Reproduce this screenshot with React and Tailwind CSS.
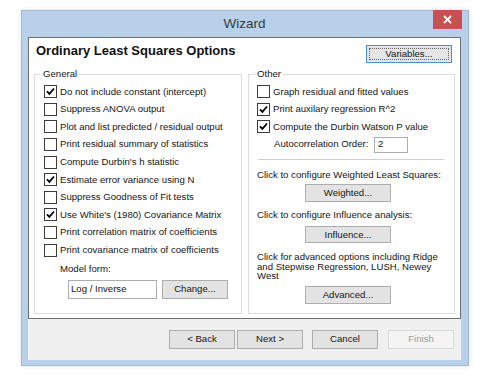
import React from "react";

const Check = ({ checked }) => (
  <span className="w-[13px] h-[13px] border border-[#3c3c3c] bg-white flex items-center justify-center shrink-0">
    {checked && (
      <svg width="9" height="9" viewBox="0 0 9 9">
        <path d="M1 4.3 L3.4 6.8 L8 1.5" fill="none" stroke="#000" strokeWidth="1.8" />
      </svg>
    )}
  </span>
);

const Row = ({ checked, label }) => (
  <div className="h-[17.6px] flex items-center gap-[3px] whitespace-nowrap">
    <Check checked={checked} />
    <span>{label}</span>
  </div>
);

const Btn = ({ children, className, disabled }) => (
  <div
    className={
      (disabled
        ? "bg-[#f4f4f4] border-[#d9d9d9] text-[#a0a0a0] "
        : "bg-[#e3e3e3] border-[#adadad] ") +
      "flex items-center justify-center border " +
      className
    }
  >
    {children}
  </div>
);

export default function App() {
  return (
    <div className="w-[500px] h-[375px] bg-white font-['Liberation_Sans',Arial,sans-serif] text-[9.6px] text-[#151515] pt-[10px] pl-[21px]">
      <div className="w-[448px] h-[356px] bg-[#b8d0e9] border border-[#a3bcd6] flex flex-col pl-[6px] pr-[7px] pb-[5px] shadow-[0_0_5px_rgba(0,0,0,0.12)]">
        <div className="h-[26px] shrink-0 relative flex items-center justify-center">
          <span className="text-[13.5px] text-[#3a3a3a] mt-[1px]">Wizard</span>
          <div className="absolute -right-[1px] -top-[1px] w-[29px] h-[19px] bg-[#c75050] flex items-center justify-center">
            <svg width="9" height="9" viewBox="0 0 9 9">
              <path d="M1 1 L8 8 M8 1 L1 8" stroke="#fff" strokeWidth="1.8" />
            </svg>
          </div>
        </div>
        <div className="flex-1 bg-[#f0f0f0] flex flex-col">
          <div className="h-[282px] shrink-0 bg-white border border-[#6f6f6f] flex flex-col">
            <div className="h-[36px] shrink-0 flex justify-between items-start pl-[7px] pr-[8px]">
              <span className="mt-[5px] text-[13px] font-bold leading-[15px] text-[#111]">
                Ordinary Least Squares Options
              </span>
              <div className="mt-[7px] w-[86px] h-[18px] relative bg-[#e5e5e5] border border-[#4d90d0] flex items-center justify-center">
                <div className="absolute inset-[2px] border border-dotted border-[#666]"></div>
                <span>Variables...</span>
              </div>
            </div>
            <div className="flex pl-[5px] gap-[6px] h-[240px]">
              <div className="w-[208px] h-full border border-[#dcdcdc] relative pl-[9px] pt-[8px] flex flex-col">
                <span className="absolute -top-[7px] left-[6px] bg-white px-[2px] leading-[12px]">General</span>
                <Row checked label="Do not include constant (intercept)" />
                <Row label="Suppress ANOVA output" />
                <Row label="Plot and list predicted / residual output" />
                <Row label="Print residual summary of statistics" />
                <Row label="Compute Durbin's h statistic" />
                <Row checked label="Estimate error variance using N" />
                <Row label="Suppress Goodness of Fit tests" />
                <Row checked label="Use White's (1980) Covariance Matrix" />
                <Row label="Print correlation matrix of coefficients" />
                <Row label="Print covariance matrix of coefficients" />
                <div className="mt-[4px] ml-[16px] leading-[12px]">Model form:</div>
                <div className="mt-[5px] ml-[24px] flex gap-[5px]">
                  <div className="w-[89px] h-[19px] border border-[#abadb3] bg-white flex items-center pl-[2px]">
                    Log / Inverse
                  </div>
                  <Btn className="w-[66px] h-[19px]">Change...</Btn>
                </div>
              </div>
              <div className="w-[207px] h-full border border-[#dcdcdc] relative pl-[8px] pt-[8px] flex flex-col">
                <span className="absolute -top-[7px] left-[6px] bg-white px-[2px] leading-[12px]">Other</span>
                <Row label="Graph residual and fitted values" />
                <Row checked label="Print auxilary regression R^2" />
                <Row checked label="Compute the Durbin Watson P value" />
                <div className="h-[17.6px] flex items-center pl-[17px]">
                  <span className="w-[100px] whitespace-nowrap">Autocorrelation Order:</span>
                  <div className="w-[34px] h-[16px] border border-[#abadb3] bg-white flex items-center pl-[3px]">2</div>
                </div>
                <div className="mt-[6px] ml-[1px] mr-[10px] h-px bg-[#cfcfcf]"></div>
                <div className="mt-[9px] leading-[12px] whitespace-nowrap">Click to configure Weighted Least Squares:</div>
                <Btn className="mt-[3px] ml-[48px] w-[86px] h-[18px]">Weighted...</Btn>
                <div className="mt-[7px] leading-[12px] whitespace-nowrap">Click to configure Influence analysis:</div>
                <Btn className="mt-[5px] ml-[48px] w-[86px] h-[17px]">Influence...</Btn>
                <div className="mt-[9px] leading-[9.5px] whitespace-nowrap">
                  Click for advanced options including Ridge
                  <br />
                  and Stepwise Regression, LUSH, Newey
                  <br />
                  West
                </div>
                <Btn className="mt-[5.5px] ml-[48px] w-[86px] h-[18px]">Advanced...</Btn>
              </div>
            </div>
          </div>
          <div className="flex-1 flex justify-end items-start pt-[11px] pr-[7px]">
            <Btn className="w-[66px] h-[19px]">&lt; Back</Btn>
            <Btn className="ml-[2px] w-[66px] h-[19px]">Next &gt;</Btn>
            <Btn className="ml-[9px] w-[66px] h-[19px]">Cancel</Btn>
            <Btn disabled className="ml-[10px] w-[66px] h-[19px]">Finish</Btn>
          </div>
        </div>
      </div>
    </div>
  );
}
